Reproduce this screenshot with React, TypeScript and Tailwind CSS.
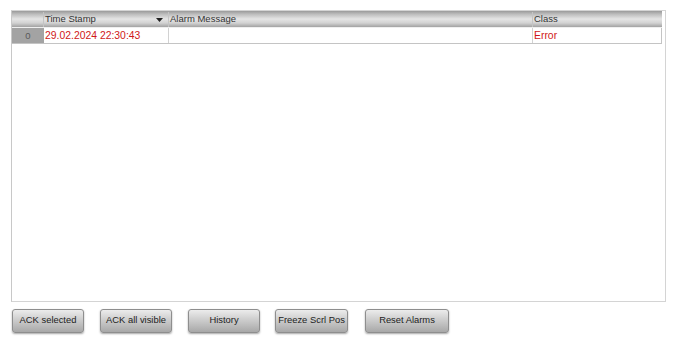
import React from "react";

const hdr =
  "bg-[linear-gradient(to_bottom,#9a9a9a_0%,#bdbdbd_20%,#e4e4e4_50%,#d2d2d2_75%,#a2a2a2_100%)]";

function Btn({ w, label }: { w: string; label: string }) {
  return (
    <div
      className={`${w} h-[24px] flex items-center justify-center rounded-[3px] border border-[#8e8e8e] bg-[linear-gradient(to_bottom,#ececec_0%,#d0d0d0_40%,#a8a8a8_100%)] shadow-[0_1px_2px_rgba(0,0,0,0.35)] text-[9.4px] text-[#222] pb-[1px]`}
    >
      {label}
    </div>
  );
}

export default function App() {
  return (
    <div
      className="w-[690px] h-[340px] bg-white pl-[11px] pt-[10px]"
      style={{ fontFamily: '"Liberation Sans", Arial, sans-serif' }}
    >
      <div className="w-[655px] h-[292px] border border-[#d4d4d4] border-l-[#c8c8c8]">
        <div className="w-[650px]">
          {/* header */}
          <div className={`flex h-[17px] ${hdr} border-b border-[#efefef] text-[9.5px] text-[#333] leading-[14px] pt-[1px]`}>
            <div className="w-[32px] border-r border-[#c4c4c4]" />
            <div className="w-[125px] border-r border-[#c4c4c4] pl-[1px] flex items-start justify-between pr-[5px]">
              <span>Time Stamp</span>
              <svg width="7" height="4" viewBox="0 0 7 4" className="mt-[6px]">
                <polygon points="0,0 7,0 3.5,4" fill="#222" />
              </svg>
            </div>
            <div className="w-[364px] border-r border-[#c4c4c4] pl-[1px]">Alarm Message</div>
            <div className="w-[129px] pl-[1px]">Class</div>
          </div>
          {/* row */}
          <div className="flex h-[16px] border-b border-[#c4c4c4] text-[10.4px] leading-[15px]">
            <div className="w-[32px] bg-[#a3a3a3] text-[#5a5a5a] text-center text-[9.5px]">0</div>
            <div className="w-[125px] border-r border-[#d2d2d2] pl-[1px] text-[#d01818]">29.02.2024 22:30:43</div>
            <div className="w-[364px] border-r border-[#d2d2d2]" />
            <div className="w-[129px] border-r border-[#c4c4c4] pl-[1px] text-[#d01818]">Error</div>
          </div>
        </div>
      </div>
      <div className="flex mt-[7px] ml-[1px]">
        <Btn w="w-[72px]" label="ACK selected" />
        <div className="w-[16px]" />
        <Btn w="w-[72px]" label="ACK all visible" />
        <div className="w-[16px]" />
        <Btn w="w-[72px]" label="History" />
        <div className="w-[15px]" />
        <Btn w="w-[73px]" label="Freeze Scrl Pos" />
        <div className="w-[17px]" />
        <Btn w="w-[84px]" label="Reset Alarms" />
      </div>
    </div>
  );
}
